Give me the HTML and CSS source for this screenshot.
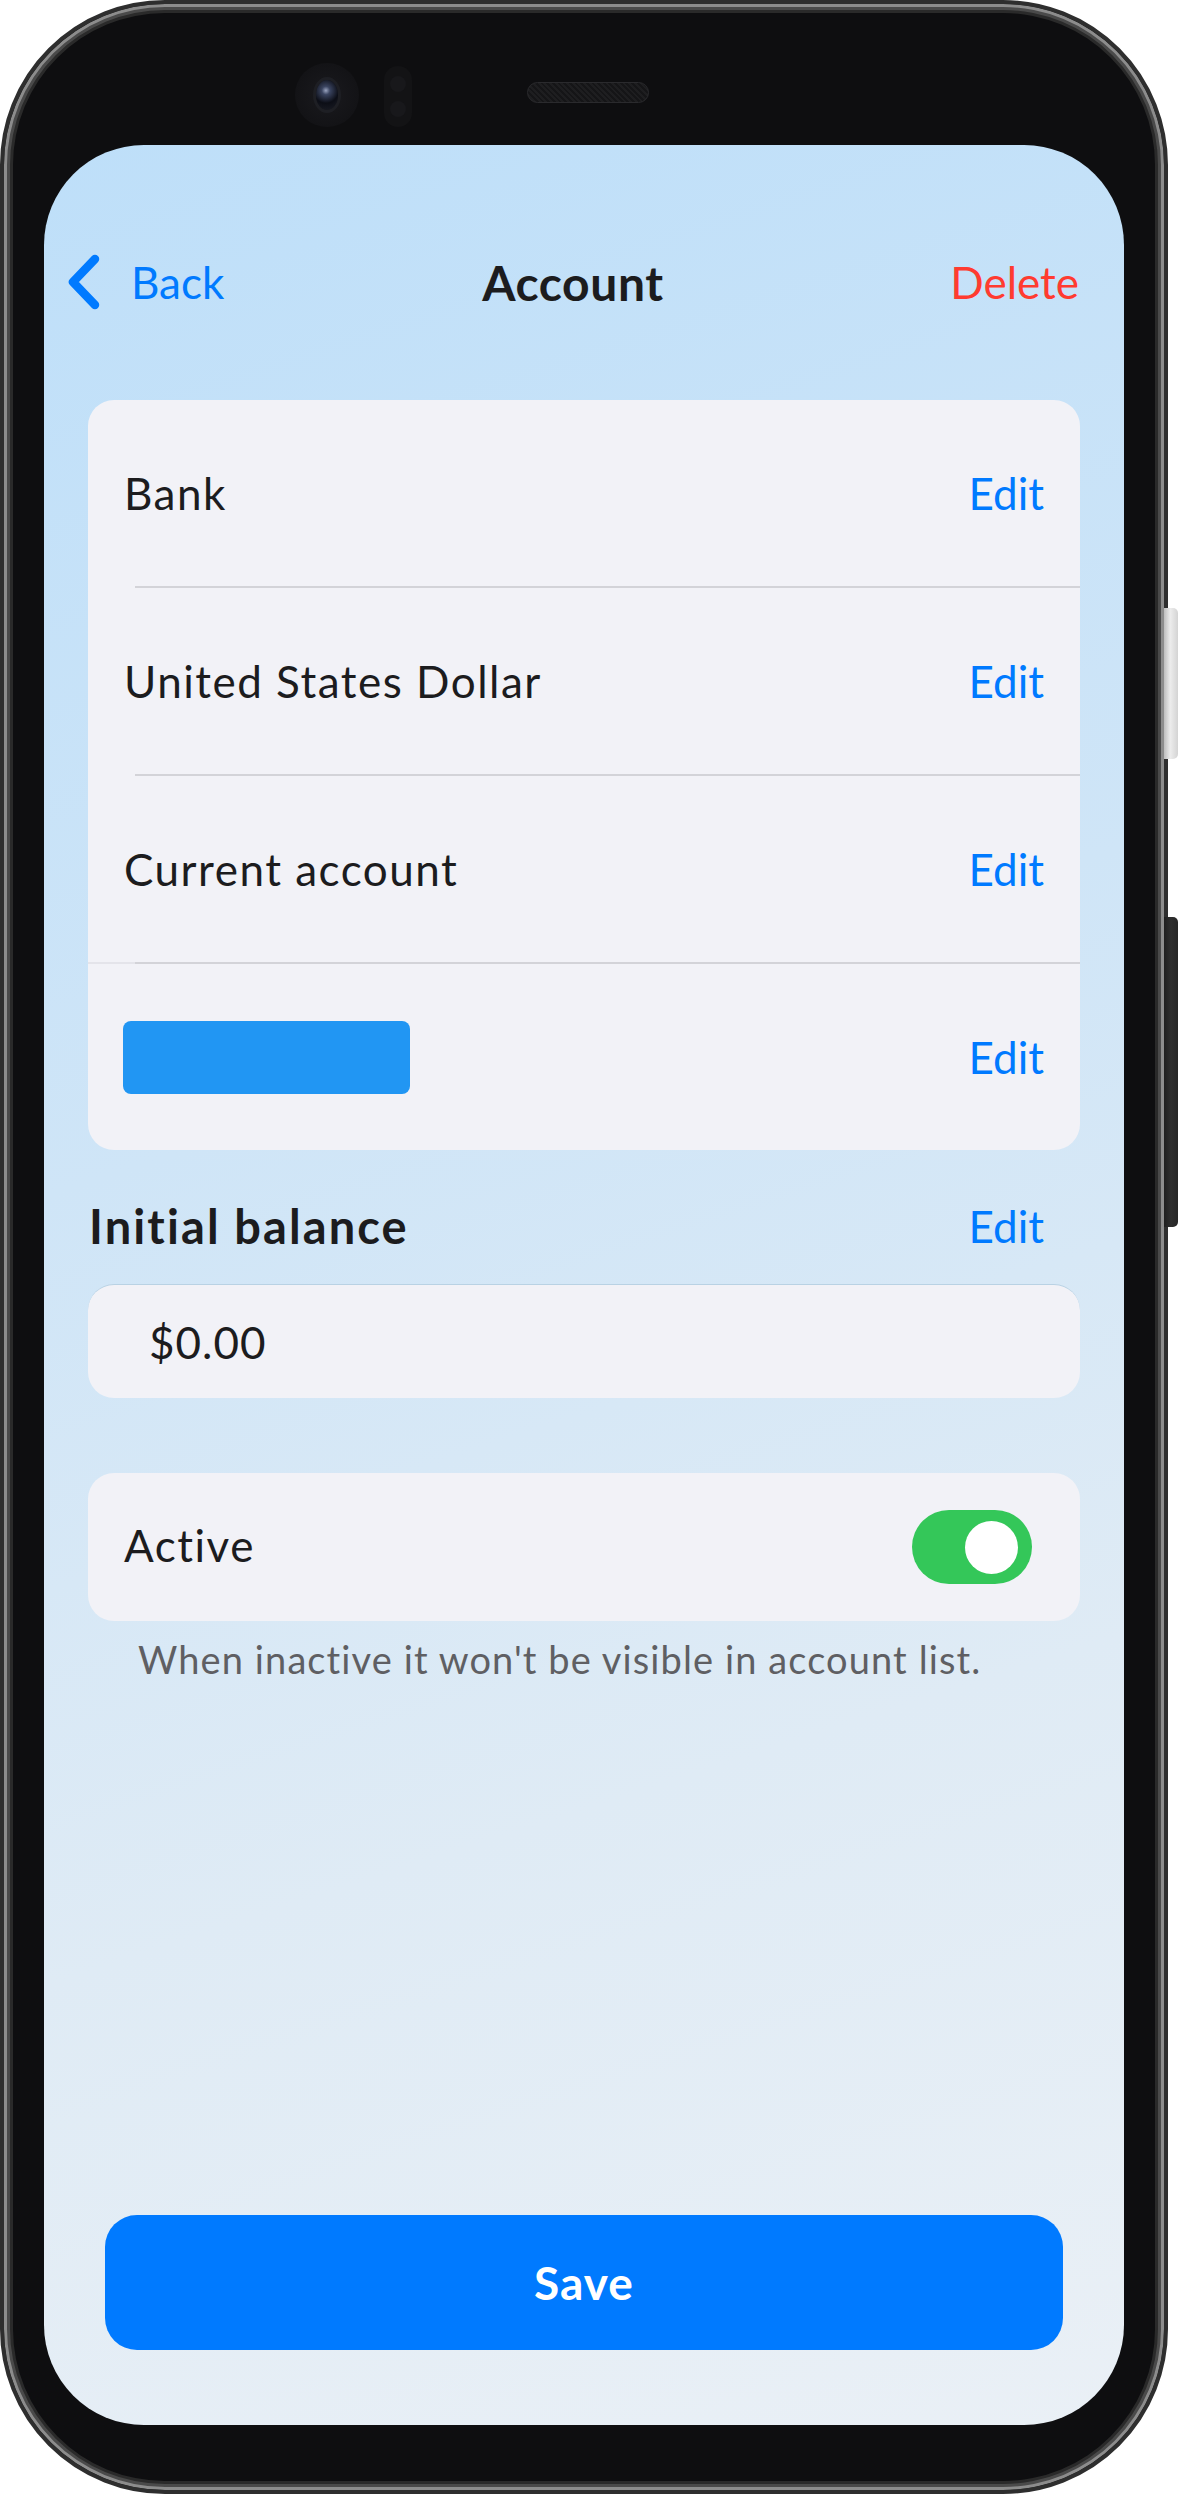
FILE: index.html
```html
<!DOCTYPE html>
<html lang="en">
<head>
<meta charset="utf-8">
<title>Account</title>
<link rel="stylesheet" href="styles.css">
</head>
<body>
<div class="phone">
  <div class="side-btn side-btn-light"></div>
  <div class="side-btn side-btn-dark"></div>
  <div class="device">
    <div class="top-bezel">
      <div class="camera"><div class="lens"></div></div>
      <div class="sensor"><span></span><span></span></div>
      <div class="speaker"></div>
    </div>
    <div class="screen">
      <div class="nav">
        <div class="back">
          <svg class="chevron" width="34" height="56" viewBox="0 0 34 56"><polyline points="28,5 6,28 28,51" fill="none" stroke="#007aff" stroke-width="8.5" stroke-linecap="round" stroke-linejoin="round"/></svg>
          <span>Back</span>
        </div>
        <div class="title">Account</div>
        <div class="delete">Delete</div>
      </div>

      <div class="card">
        <div class="row"><span class="label">Bank</span><span class="edit">Edit</span></div>
        <div class="sep"></div>
        <div class="row"><span class="label">United States Dollar</span><span class="edit">Edit</span></div>
        <div class="sep"></div>
        <div class="row"><span class="label">Current account</span><span class="edit">Edit</span></div>
        <div class="sep sep-full"></div>
        <div class="row"><span class="swatch"></span><span class="edit">Edit</span></div>
      </div>

      <div class="section-head">
        <span class="section-title">Initial balance</span>
        <span class="edit">Edit</span>
      </div>
      <div class="field">$0.00</div>

      <div class="toggle-card">
        <span class="label label-active">Active</span>
        <div class="toggle"><div class="knob"></div></div>
      </div>
      <p class="footnote">When inactive it won't be visible in account list.</p>

      <div class="save">Save</div>
    </div>
  </div>
</div>
</body>
</html>
```

FILE: styles.css
```css
html, body {
  margin: 0;
  padding: 0;
  background: #ffffff;
}

body {
  font-family: "Lato", "Noto Sans", "DejaVu Sans", sans-serif;
  color: #1c1c1e;
}

.phone {
  position: relative;
  width: 1178px;
  height: 2496px;
}

.side-btn {
  position: absolute;
  left: 1164px;
  width: 14px;
  border-radius: 0 5px 5px 0;
}

.side-btn-light {
  top: 608px;
  height: 151px;
  background: linear-gradient(90deg, #bdbdbd 0%, #ececec 45%, #d4d4d4 100%);
}

.side-btn-dark {
  top: 917px;
  height: 310px;
  background: linear-gradient(90deg, #1e1e1e 0%, #2e2e2e 50%, #262626 100%);
}

.device {
  width: 1168px;
  height: 2494px;
  box-sizing: border-box;
  border-radius: 165px;
  background: #0e0e10;
  border: 4px solid #2e2e2e;
  box-shadow: inset 0 0 0 3px #8c8c8c, inset 0 0 0 6px #4a4a4a, inset 0 0 0 9px #2a2a2a;
  display: flex;
  flex-direction: column;
  align-items: center;
}

.top-bezel {
  height: 141px;
  width: 100%;
  box-sizing: border-box;
  padding-left: 291px;
  display: flex;
  align-items: flex-start;
}

.camera {
  margin-top: 59px;
  width: 64px;
  height: 64px;
  border-radius: 50%;
  background: radial-gradient(circle at 50% 50%, #1a1a1e 0%, #131316 70%, #101012 100%);
  display: flex;
  align-items: center;
  justify-content: center;
}

.lens {
  width: 22px;
  height: 30px;
  border-radius: 50%;
  background: radial-gradient(circle at 45% 35%, #9aa4c0 0%, #3a4460 18%, #0c0e16 55%, #1c1e26 100%);
  box-shadow: 0 0 0 3px #1e1f24;
}

.sensor {
  margin-top: 62px;
  margin-left: 25px;
  width: 28px;
  height: 61px;
  border-radius: 14px;
  background: #131315;
  display: flex;
  flex-direction: column;
  align-items: center;
  justify-content: space-evenly;
}

.sensor span {
  width: 16px;
  height: 16px;
  border-radius: 50%;
  background: #18181b;
}

.speaker {
  margin-top: 78px;
  margin-left: 115px;
  width: 122px;
  height: 21px;
  box-sizing: border-box;
  border-radius: 11px;
  border: 1px solid #2a2a2d;
  background: repeating-linear-gradient(45deg, #1e1e20 0 2px, #151517 2px 4px);
}

.screen {
  width: 1080px;
  height: 2280px;
  box-sizing: border-box;
  border-radius: 100px;
  background: linear-gradient(162deg, #bedff9 0%, #cfe5f7 40%, #dfebf5 70%, #eaf0f6 100%);
  display: flex;
  flex-direction: column;
  padding: 92px 0 75px;
  overflow: hidden;
}

.nav {
  height: 90px;
  display: grid;
  grid-template-columns: 1fr auto 1fr;
  align-items: center;
  padding: 0 45px 0 23px;
}

.back {
  display: flex;
  align-items: center;
  gap: 30px;
  color: #007aff;
  font-size: 44px;
}

.chevron {
  display: block;
}

.title {
  font-size: 48px;
  font-weight: 700;
  letter-spacing: 0.6px;
  color: #1c1c1e;
}

.delete {
  justify-self: end;
  color: #ff3b30;
  font-size: 44px;
}

.card {
  margin: 73px 44px 0;
  background: #f2f2f7;
  border-radius: 26px;
  overflow: hidden;
}

.row {
  height: 186px;
  display: flex;
  align-items: center;
  justify-content: space-between;
  padding: 0 36px;
}

.label {
  font-size: 44px;
  letter-spacing: 1.5px;
  color: #1c1c1e;
}

.label-active {
  padding-bottom: 5px;
}

.edit {
  font-size: 44px;
  color: #007aff;
}

.sep {
  height: 2px;
  margin-left: 47px;
  background: #d3d3d8;
}

.sep-full {
  margin-left: 0;
  background: linear-gradient(90deg, #e4e4ea 0 47px, #d3d3d8 47px);
}

.swatch {
  width: 287px;
  height: 73px;
  margin-left: -1px;
  border-radius: 8px;
  background: #2196f3;
}

.section-head {
  margin: 40px 80px 22px 45px;
  height: 72px;
  display: flex;
  align-items: center;
  justify-content: space-between;
}

.section-title {
  font-size: 47px;
  font-weight: 700;
  letter-spacing: 2.1px;
  color: #1c1c1e;
}

.field {
  margin: 0 44px;
  height: 114px;
  box-sizing: border-box;
  border-radius: 26px;
  background: #f2f2f7;
  border-top: 1px solid #b9d2e4;
  padding-left: 61px;
  display: flex;
  align-items: center;
  font-size: 44px;
  letter-spacing: 1px;
  color: #1c1c1e;
}

.toggle-card {
  margin: 75px 44px 0;
  height: 148px;
  border-radius: 26px;
  background: #f2f2f7;
  display: flex;
  align-items: center;
  justify-content: space-between;
  padding: 0 48px 0 36px;
}

.toggle {
  width: 120px;
  height: 74px;
  border-radius: 37px;
  background: #34c759;
  display: flex;
  align-items: center;
  justify-content: flex-end;
  padding-right: 14px;
  box-sizing: border-box;
}

.knob {
  width: 53px;
  height: 53px;
  border-radius: 50%;
  background: #ffffff;
}

.footnote {
  margin: 13px 0 0 94px;
  font-size: 38px;
  line-height: 50px;
  letter-spacing: 1.1px;
  color: #5f5f63;
}

.save {
  margin: auto 61px 0;
  height: 135px;
  border-radius: 32px;
  background: #007aff;
  color: #ffffff;
  font-size: 46px;
  font-weight: 700;
  letter-spacing: 1px;
  display: flex;
  align-items: center;
  justify-content: center;
}
```
